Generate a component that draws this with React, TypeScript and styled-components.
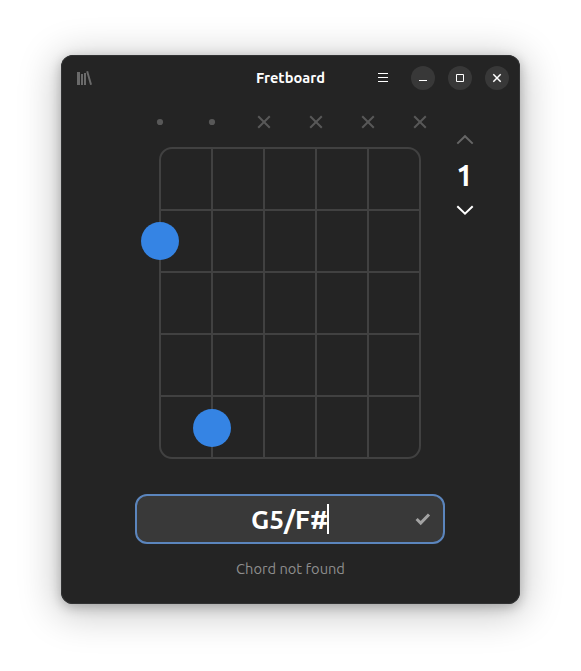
import React from "react";
import styled, { createGlobalStyle } from "styled-components";

const GlobalStyle = createGlobalStyle`
  * { box-sizing: border-box; }
  body {
    margin: 0;
    background: #fff;
    overflow: hidden;
    font-family: Ubuntu, "Noto Sans", sans-serif;
    color: #fff;
  }
`;

const Desktop = styled.div`
  width: 581px;
  height: 671px;
  padding: 55px 0 0 61px;
`;

const AppWindow = styled.main`
  display: flex;
  flex-direction: column;
  width: 459px;
  height: 549px;
  border-radius: 12px;
  background: #242424;
  box-shadow: inset 0 0 0 1px #313233, 0 3px 12px rgba(0, 0, 0, 0.25),
    0 6px 38px 5px rgba(0, 0, 0, 0.22);
`;

const HeaderBar = styled.header`
  display: grid;
  grid-template-columns: 1fr auto 1fr;
  align-items: center;
  height: 46px;
  padding: 0 11px;
`;

const Title = styled.h1`
  margin: 0 0 1px;
  font-size: 14.67px;
  font-weight: 700;
  line-height: 20px;
`;

const IconButton = styled.button`
  display: flex;
  padding: 0;
  border: 0;
  background: none;
  color: #fff;
`;

const LibraryButton = styled(IconButton)`
  margin-left: 4px;
  color: #6a6a6a;
`;

const Controls = styled.div`
  display: flex;
  justify-content: flex-end;
  align-items: center;
  gap: 13px;
`;

const MenuButton = styled(IconButton)`
  margin-right: 7px;
`;

const WindowButton = styled(IconButton)`
  width: 24px;
  height: 24px;
  border-radius: 50%;
  background: #383838;
`;

const Content = styled.section`
  display: flex;
  padding-left: 73px;
  height: 393px;
`;

const Chart = styled.div`
  width: 312px;
`;

const StringMarks = styled.div`
  display: grid;
  grid-template-columns: repeat(6, 52px);
  justify-items: center;
  align-items: center;
  height: 42px;
  color: #585858;
`;

const Board = styled.svg`
  display: block;
`;

const PositionStepper = styled.div`
  display: flex;
  flex-direction: column;
  align-items: center;
  width: 38px;
  padding-top: 31px;
`;

const StepButton = styled(IconButton)<{ $dimmed?: boolean }>`
  color: ${({ $dimmed }) => ($dimmed ? "#666" : "#fff")};
`;

const Position = styled.span`
  height: 54px;
  padding-right: 1px;
  font-size: 29.33px;
  font-weight: 700;
  line-height: 56px;
`;

const Entry = styled.div`
  display: flex;
  align-items: center;
  justify-content: center;
  position: relative;
  width: 310px;
  height: 50px;
  margin-left: 74px;
  border: 2px solid #5b85bd;
  border-radius: 12px;
  background: #393939;
`;

const ChordName = styled.span`
  font-size: 26.4px;
  font-weight: 700;
  line-height: 36px;
`;

const Caret = styled.span`
  width: 2px;
  height: 30px;
  margin-left: -1px;
  background: #fff;
`;

const Accept = styled(IconButton)`
  position: absolute;
  right: 12px;
  top: 15px;
  color: #a3a3a3;
`;

const Status = styled.p`
  margin: 15px 0 0;
  text-align: center;
  font-size: 14.67px;
  line-height: 20px;
  color: #8e8e8e;
`;

const marks = ["open", "open", "muted", "muted", "muted", "muted"];
const stringLines = [78, 130, 182, 234];
const fretLines = [63, 125, 187, 249];
const fingers = [
  { x: 26, y: 94 },
  { x: 78, y: 281 },
];

function StringMark({ kind }: { kind: string }) {
  return (
    <svg width="16" height="16" viewBox="0 0 16 16">
      {kind === "open" ? (
        <circle cx="8" cy="8" r="3.1" fill="currentColor" />
      ) : (
        <path d="M2.2 2.2 13.8 13.8M13.8 2.2 2.2 13.8" stroke="currentColor" strokeWidth="2" />
      )}
    </svg>
  );
}

function Chevron({ up }: { up?: boolean }) {
  return (
    <svg width="18" height="16" viewBox="0 0 18 16" fill="none" stroke="currentColor" strokeWidth="2">
      <path d={up ? "M1.3 11.6 9 4.2l7.7 7.4" : "M1.3 4.2 9 11.6l7.7-7.4"} />
    </svg>
  );
}

export default function App() {
  return (
    <>
      <GlobalStyle />
      <Desktop>
        <AppWindow>
          <HeaderBar>
            <LibraryButton aria-label="Bookmarks">
              <svg width="18" height="16" viewBox="0 0 18 16" fill="currentColor">
                <path d="M1 2h3v13H1zM5 4h2v11H5zM8 3h2v12H8zM10.2 1.5l1.9-.4L16 14.5l-1.9.5z" />
              </svg>
            </LibraryButton>
            <Title>Fretboard</Title>
            <Controls>
              <MenuButton aria-label="Menu">
                <svg width="16" height="16" viewBox="0 0 16 16" fill="currentColor">
                  <path d="M3 3h10v1H3zM3 7h10v1H3zM3 11h10v1H3z" />
                </svg>
              </MenuButton>
              <WindowButton aria-label="Minimize">
                <svg width="24" height="24" fill="currentColor">
                  <path d="M8 14h8v1H8z" />
                </svg>
              </WindowButton>
              <WindowButton aria-label="Maximize">
                <svg width="24" height="24" fill="none" stroke="currentColor">
                  <path d="M8.5 8.5h7v7h-7z" />
                </svg>
              </WindowButton>
              <WindowButton aria-label="Close">
                <svg width="24" height="24" fill="none" stroke="currentColor" strokeWidth="1.5">
                  <path d="m8.3 8.3 7.4 7.4m0-7.4-7.4 7.4" />
                </svg>
              </WindowButton>
            </Controls>
          </HeaderBar>
          <Content>
            <Chart>
              <StringMarks>
                {marks.map((kind, i) => (
                  <StringMark key={i} kind={kind} />
                ))}
              </StringMarks>
              <Board width="312" height="320" viewBox="0 -4 312 320">
                <g fill="none" stroke="#414141" strokeWidth="2">
                  <rect x="26" y="1" width="260" height="310" rx="12" />
                  {stringLines.map((x) => (
                    <path key={x} d={`M${x} 1v310`} />
                  ))}
                  {fretLines.map((y) => (
                    <path key={y} d={`M26 ${y}h260`} />
                  ))}
                </g>
                {fingers.map(({ x, y }) => (
                  <circle key={x} cx={x} cy={y} r="19" fill="#3584e4" />
                ))}
              </Board>
            </Chart>
            <PositionStepper>
              <StepButton $dimmed aria-label="Previous position">
                <Chevron up />
              </StepButton>
              <Position>1</Position>
              <StepButton aria-label="Next position">
                <Chevron />
              </StepButton>
            </PositionStepper>
          </Content>
          <Entry>
            <ChordName>G5/F#</ChordName>
            <Caret />
            <Accept aria-label="Accept">
              <svg width="16" height="16" viewBox="0 0 16 16" fill="none" stroke="currentColor" strokeWidth="3">
                <path d="m1.6 8 4.1 4.1L14 3.5" />
              </svg>
            </Accept>
          </Entry>
          <Status>Chord not found</Status>
        </AppWindow>
      </Desktop>
    </>
  );
}
